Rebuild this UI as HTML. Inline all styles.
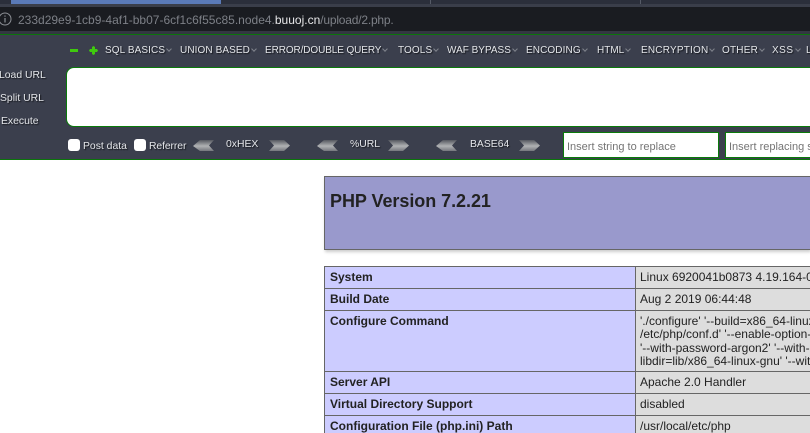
<!DOCTYPE html>
<html><head><meta charset="utf-8"><style>
html,body{margin:0;padding:0;background:#fff;}
#r{position:relative;width:810px;height:433px;overflow:hidden;font-family:"Liberation Sans",sans-serif;background:#fff;}
#r div,#r span.a{position:absolute;white-space:nowrap;}
.m{top:44px;font-size:10px;line-height:13px;color:#e4e6ea;text-shadow:1px 1px 1px #15171c;}
.m i{display:inline-block;width:3px;height:3px;border-right:1px solid #7f838c;border-bottom:1px solid #7f838c;transform:rotate(45deg);margin-left:2px;vertical-align:2px;}
.l{font-size:10.4px;line-height:13px;color:#e4e6ea;text-shadow:1px 1px 1px #15171c;}
.c{top:139px;width:12px;height:12px;background:#fff;border-radius:3px;}
.k{font-weight:bold;color:#222;font-size:12px;line-height:14px;left:330px;}
.v{color:#222;font-size:12px;line-height:14px;left:640px;}
.inp{top:132px;height:24px;background:#fff;border:1px solid #0a7a0a;color:#757575;font-size:11px;line-height:28px;padding-left:3px;overflow:hidden;box-sizing:content-box;}
.bgk{background:#ccf;left:325px;width:310px;}
.bgv{background:#ddd;left:636px;width:174px;}
</style></head><body><div id="r">

<div style="left:0;top:0;width:810px;height:4px;background:#2b2f3b;"></div>
<div style="left:11px;top:0;width:210px;height:4px;background:#5a7ab8;"></div>
<div style="left:430px;top:0;width:1px;height:4px;background:#555a66;"></div>
<div style="left:640px;top:0;width:1px;height:4px;background:#555a66;"></div>
<div style="left:0;top:4px;width:810px;height:3px;background:#3a3e4a;"></div>
<div style="left:0;top:7px;width:810px;height:24px;background:#1a1c21;"></div>
<div style="left:0;top:31px;width:810px;height:3px;background:#333741;"></div>
<div style="left:0;top:34px;width:810px;height:1px;background:#0b750b;"></div>
<div style="left:0;top:35px;width:810px;height:124px;background:#3b3f4d;"></div>
<div style="left:0;top:159px;width:810px;height:1px;background:#0b750b;"></div>

<svg style="position:absolute;left:0;top:12px" width="13" height="14" viewBox="0 0 13 14"><circle cx="5" cy="7" r="6" fill="none" stroke="#8d9096" stroke-width="1"/><rect x="4.4" y="6" width="1.2" height="4.500" fill="#8d9096"/><rect x="4.4" y="3.500" width="1.2" height="1.2" fill="#8d9096"/></svg>
<div style="left:18px;top:13px;font-size:12px;line-height:14px;color:#7d8087;">233d29e9-1cb9-4af1-bb07-6cf1c6f55c85.node4.<span style="color:#e8e8ea">buuoj.cn</span><span style="letter-spacing:-.2px">/upload/2.php.</span></div>

<div style="left:70px;top:49px;width:8px;height:3px;background:#3fc90e;"></div>
<svg style="position:absolute;left:89px;top:46px" width="9" height="9" viewBox="0 0 9 9"><path d="M3 1L4.500 0 6 1V3H8L9 4.500 8 6H6V8L4.500 9 3 8V6H1L0 4.500 1 3H3z" fill="#3fc90e"/></svg>

<div class="m" style="left:105px;letter-spacing:.1px">SQL BASICS<i></i></div>
<div class="m" style="left:180px;letter-spacing:.1px">UNION BASED<i></i></div>
<div class="m" style="left:265px;letter-spacing:-.1px">ERROR/DOUBLE QUERY<i></i></div>
<div class="m" style="left:398px;letter-spacing:.1px">TOOLS<i></i></div>
<div class="m" style="left:447px">WAF BYPASS<i></i></div>
<div class="m" style="left:526px;letter-spacing:.1px">ENCODING<i></i></div>
<div class="m" style="left:597px">HTML<i></i></div>
<div class="m" style="left:641px;letter-spacing:.2px">ENCRYPTION<i></i></div>
<div class="m" style="left:722px;letter-spacing:.2px">OTHER<i></i></div>
<div class="m" style="left:772px;letter-spacing:.5px">XSS<i></i></div>
<div class="m" style="left:806px">LFI</div>

<div class="l" style="left:-1px;top:69px">Load URL</div>
<div class="l" style="left:0;top:92px">Split URL</div>
<div class="l" style="left:1px;top:115px">Execute</div>

<div style="left:66px;top:67px;width:760px;height:58px;background:#fff;border:1px solid #0a7a0a;border-radius:8px;box-sizing:content-box;"></div>

<div class="c" style="left:68px"></div>
<div class="l" style="left:83px;top:140px">Post data</div>
<div class="c" style="left:134px"></div>
<div class="l" style="left:149px;top:140px;letter-spacing:-.1px">Referrer</div>

<svg style="position:absolute;left:0;top:0;width:810px;height:160px" viewBox="0 0 810 160">
<defs>
<linearGradient id="g" x1="0" y1="0" x2="0" y2="1"><stop offset="0" stop-color="#55585f"/><stop offset=".55" stop-color="#b0b2b4"/><stop offset="1" stop-color="#75777d"/></linearGradient>
</defs>
<g fill="url(#g)">
<path d="M200 140h14l-5 5.500 5 5.500h-14l-7-5z"/>
<path d="M269 140h15l6 5.500-6 5.500h-15l5-5.500z"/>
<path d="M324 140h14l-5 5.500 5 5.500h-14l-7-5z"/>
<path d="M388 140h15l6 5.500-6 5.500h-15l5-5.500z"/>
<path d="M443 140h14l-5 5.500 5 5.500h-14l-7-5z"/>
<path d="M519 140h15l6 5.500-6 5.500h-15l5-5.500z"/>
</g></svg>
<div class="l" style="left:226px;top:138px">0xHEX</div>
<div class="l" style="left:350px;top:138px">%URL</div>
<div class="l" style="left:470px;top:138px">BASE64</div>

<div class="inp" style="left:563px;width:151px;">Insert string to replace</div>
<div class="inp" style="left:725px;width:100px;">Insert replacing string</div>

<div style="left:324px;top:176px;width:486px;height:74px;background:#99c;border:1px solid #666;border-right:0;box-sizing:border-box;box-shadow:1px 2px 3px #ccc;"></div>
<div style="left:330px;top:191px;font-size:18px;line-height:21px;font-weight:bold;color:#222;letter-spacing:-.05px;">PHP Version 7.2.21</div>

<div style="left:324px;top:266px;width:486px;height:167px;background:#666;"></div>
<div class="bgk" style="top:267px;height:21px"></div><div class="bgv" style="top:267px;height:21px"></div>
<div class="bgk" style="top:289px;height:21px"></div><div class="bgv" style="top:289px;height:21px"></div>
<div class="bgk" style="top:311px;height:60px"></div><div class="bgv" style="top:311px;height:60px"></div>
<div class="bgk" style="top:372px;height:21px"></div><div class="bgv" style="top:372px;height:21px"></div>
<div class="bgk" style="top:394px;height:21px"></div><div class="bgv" style="top:394px;height:21px"></div>
<div class="bgk" style="top:416px;height:17px"></div><div class="bgv" style="top:416px;height:17px"></div>

<div class="k" style="top:270px">System</div><div class="v" style="top:270px">Linux 6920041b0873 4.19.164-0</div>
<div class="k" style="top:292px">Build Date</div><div class="v" style="top:292px">Aug 2 2019 06:44:48</div>
<div class="k" style="top:314px">Configure Command</div>
<div class="v" style="top:314px">'./configure' '--build=x86_64-linux</div>
<div class="v" style="top:327px">/etc/php/conf.d' '--enable-option-</div>
<div class="v" style="top:341px">'--with-password-argon2' '--with-</div>
<div class="v" style="top:354px">libdir=lib/x86_64-linux-gnu' '--wit</div>
<div class="k" style="top:375px">Server API</div><div class="v" style="top:375px">Apache 2.0 Handler</div>
<div class="k" style="top:397px">Virtual Directory Support</div><div class="v" style="top:397px">disabled</div>
<div class="k" style="top:419px">Configuration File (php.ini) Path</div><div class="v" style="top:419px">/usr/local/etc/php</div>

</div></body></html>
